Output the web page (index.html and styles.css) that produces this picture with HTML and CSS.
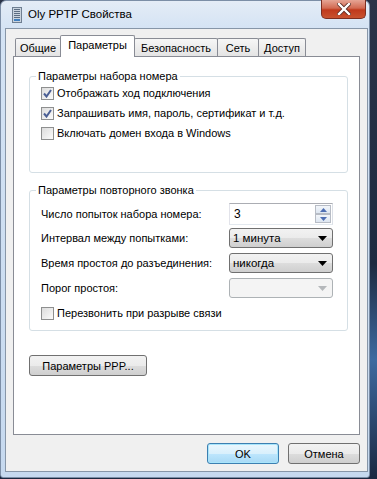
FILE: index.html
```html
<!DOCTYPE html>
<html>
<head>
  <title>Oly PPTP Свойства</title>
  <link rel="stylesheet" href="styles.css">
</head>
<body>
  <div class="window">
    <div class="titlebar">
      <svg class="app-icon" width="10" height="16" viewBox="0 0 10 16">
        <rect x="0.5" y="0.5" width="9" height="15" fill="#c9d3de" stroke="#6f7f92"/>
        <rect x="2" y="2" width="6" height="1" fill="#5c6d82"/>
        <rect x="2" y="4" width="6" height="1" fill="#5c6d82"/>
        <rect x="2" y="6" width="6" height="1" fill="#5c6d82"/>
        <rect x="2" y="8" width="6" height="1" fill="#5c6d82"/>
        <rect x="2" y="10" width="6" height="1" fill="#5c6d82"/>
        <rect x="2" y="12" width="6" height="2" fill="#3f7fc0"/>
      </svg>
      <span class="title">Oly PPTP Свойства</span>
      <button class="close">
        <svg width="14" height="12" viewBox="0 0 14 12">
          <path d="M2 1 L12 11 M12 1 L2 11" stroke="#5a2a22" stroke-width="4" stroke-linecap="square"/>
          <path d="M2 1 L12 11 M12 1 L2 11" stroke="#fff" stroke-width="2.4" stroke-linecap="square"/>
        </svg>
      </button>
    </div>

    <div class="client">
      <div class="tabs">
        <span class="tab tab-general">Общие</span>
        <span class="tab tab-options active">Параметры</span>
        <span class="tab tab-security">Безопасность</span>
        <span class="tab tab-network">Сеть</span>
        <span class="tab tab-access">Доступ</span>
      </div>

      <div class="panel">
        <fieldset class="group dial">
          <legend>Параметры набора номера</legend>
          <label class="check">
            <span class="box"><svg width="9" height="9" viewBox="0 0 9 9"><path d="M1 4.5 L3.5 7.5 L8 1" fill="none" stroke="#4b5f94" stroke-width="2"/></svg></span>
            Отображать ход подключения
          </label>
          <label class="check">
            <span class="box"><svg width="9" height="9" viewBox="0 0 9 9"><path d="M1 4.5 L3.5 7.5 L8 1" fill="none" stroke="#4b5f94" stroke-width="2"/></svg></span>
            Запрашивать имя, пароль, сертификат и т.д.
          </label>
          <label class="check">
            <span class="box"></span>
            Включать домен входа в Windows
          </label>
        </fieldset>

        <fieldset class="group redial">
          <legend>Параметры повторного звонка</legend>
          <div class="field spin-row">
            <span class="label">Число попыток набора номера:</span>
            <div class="spin">
              <span class="spin-value">3</span>
              <div class="spin-btns">
                <span class="spin-btn"><svg width="7" height="4" viewBox="0 0 7 4"><path d="M0 4 L3.5 0 L7 4Z" fill="#4f6fb3"/></svg></span>
                <span class="spin-btn"><svg width="7" height="4" viewBox="0 0 7 4"><path d="M0 0 L3.5 4 L7 0Z" fill="#4f6fb3"/></svg></span>
              </div>
            </div>
          </div>
          <div class="field">
            <span class="label">Интервал между попытками:</span>
            <div class="combo">
              <span class="combo-value">1 минута</span>
              <svg width="9" height="5" viewBox="0 0 9 5"><path d="M0 0 L9 0 L4.5 5Z" fill="#000"/></svg>
            </div>
          </div>
          <div class="field">
            <span class="label">Время простоя до разъединения:</span>
            <div class="combo">
              <span class="combo-value">никогда</span>
              <svg width="9" height="5" viewBox="0 0 9 5"><path d="M0 0 L9 0 L4.5 5Z" fill="#000"/></svg>
            </div>
          </div>
          <div class="field">
            <span class="label">Порог простоя:</span>
            <div class="combo disabled">
              <span class="combo-value"></span>
              <svg width="9" height="5" viewBox="0 0 9 5"><path d="M0 0 L9 0 L4.5 5Z" fill="#b5b8bb"/></svg>
            </div>
          </div>
          <label class="check">
            <span class="box"></span>
            Перезвонить при разрыве связи
          </label>
        </fieldset>

        <button class="btn ppp">Параметры PPP...</button>
      </div>

      <div class="footer">
        <button class="btn ok">OK</button>
        <button class="btn">Отмена</button>
      </div>
    </div>
  </div>
</body>
</html>
```

FILE: styles.css
```css
body {
  margin: 0;
  height: 479px;
  overflow: hidden;
  background: linear-gradient(#2b3448, #1e2a40 55%, #3d6aa0 75%, #1b2740);
  font-family: "Liberation Sans", Arial, sans-serif;
  font-size: 11px;
  color: #000;
}
.window {
  width: 370px;
  height: 478px;
  box-sizing: border-box;
  border: 1px solid #7c8ea6;
  border-radius: 6px 6px 3px 3px;
  background: linear-gradient(#e4ecf6, #d4e3f4 28px, #c6d9ef 100%);
}

/* Title bar */
.titlebar {
  display: flex;
  align-items: flex-start;
  height: 27px;
  padding-left: 11px;
}
.app-icon {
  margin-top: 6px;
}
.title {
  margin-left: 6px;
  margin-top: 7px;
  font-size: 11.5px;
}
.close {
  margin-left: auto;
  margin-right: 3px;
  margin-top: -1px;
  width: 45px;
  height: 19px;
  border: 1px solid #7d2e20;
  border-top: none;
  border-radius: 0 0 5px 5px;
  background: linear-gradient(#e6a595, #d26a52 45%, #c0391c 55%, #c8522f);
  display: flex;
  align-items: center;
  justify-content: center;
  padding: 0;
}

/* Client area */
.client {
  margin-left: 4px;
  width: 363px;
  height: 444px;
  box-sizing: border-box;
  border: 1px solid #8796a8;
  background: #f0f0f0;
  padding: 6px 7px 0 7px;
}
.tabs {
  display: flex;
  align-items: flex-end;
  height: 21px;
  padding-left: 2px;
}
.tab {
  height: 18px;
  box-sizing: border-box;
  border: 1px solid #898c95;
  border-bottom: none;
  margin-right: -1px;
  padding-top: 3px;
  text-align: center;
  background: linear-gradient(#f6f6f6, #e4e4e4);
  border-radius: 2px 2px 0 0;
}
.tab-general { width: 46px; }
.tab-options { width: 75px; }
.tab-security { width: 84px; }
.tab-network { width: 42px; }
.tab-access { width: 48px; }
.tab.active {
  height: 22px;
  margin-bottom: -1px;
  position: relative;
  z-index: 1;
  background: #fff;
}
.panel {
  height: 379px;
  box-sizing: border-box;
  border: 1px solid #898c95;
  background: #fff;
  padding: 12px 11px 0 15px;
}

/* Group boxes */
.group {
  margin: 0;
  padding: 0 0 0 11px;
  border: 1px solid #d5dfe5;
  border-radius: 3px;
}
.group legend {
  margin-left: -5px;
  padding: 0 2px;
  line-height: 14px;
}
.dial {
  padding-bottom: 29px;
}
.redial {
  margin-top: 10px;
  padding-bottom: 7px;
}
.check {
  display: flex;
  align-items: center;
  height: 20px;
}
.box {
  width: 13px;
  height: 13px;
  box-sizing: border-box;
  border: 1px solid #8e8f8f;
  background: linear-gradient(135deg, #dcdcdc, #fbfbfb);
  margin-right: 3px;
  display: flex;
  align-items: center;
  justify-content: center;
}
.field {
  display: flex;
  align-items: center;
  height: 20px;
  margin-bottom: 5px;
  padding-right: 14px;
}
.spin-row {
  margin-top: 6px;
  height: 22px;
  margin-bottom: 3px;
}
.label {
  flex: 1;
}

/* Spin box */
.spin {
  width: 104px;
  height: 22px;
  box-sizing: border-box;
  border: 1px solid #abadb3;
  border-color: #abadb3 #dbdfe6 #e3e9ef #e2e3ea;
  background: #fff;
  display: flex;
  align-items: center;
}
.spin-value {
  flex: 1;
  padding-left: 4px;
  font-size: 12px;
}
.spin-btns {
  display: flex;
  flex-direction: column;
  margin-right: 1px;
}
.spin-btn {
  width: 16px;
  height: 9px;
  box-sizing: border-box;
  border: 1px solid #b7bcc5;
  background: linear-gradient(#f3f6fa, #dde6f1);
  display: flex;
  align-items: center;
  justify-content: center;
}

/* Combo boxes */
.combo {
  width: 104px;
  height: 20px;
  box-sizing: border-box;
  border: 1px solid #707070;
  border-radius: 3px;
  background: linear-gradient(#f2f2f2, #ebebeb 50%, #dddddd 51%, #cfcfcf);
  display: flex;
  align-items: center;
  padding: 0 5px 0 3px;
}
.combo-value {
  flex: 1;
  font-size: 11.5px;
}
.combo.disabled {
  border-color: #adb2b5;
  background: #f4f4f4;
}

/* Buttons */
.btn {
  font-family: "Liberation Sans", Arial, sans-serif;
  font-size: 11px;
  color: #000;
  height: 21px;
  border: 1px solid #707070;
  border-radius: 3px;
  background: linear-gradient(#f2f2f2, #ebebeb 50%, #dddddd 51%, #cfcfcf);
  padding: 0;
}
.ppp {
  margin-top: 24px;
  width: 118px;
}
.footer {
  display: flex;
  justify-content: flex-end;
  gap: 9px;
  margin-top: 8px;
}
.footer .btn {
  width: 72px;
}
.ok {
  border-color: #3c7fb1;
  background: linear-gradient(#eaf6fd, #d9f0fc 50%, #bee6fd 51%, #a7d9f5);
  box-shadow: inset 0 0 0 1px #a8e5fb;
}
```
